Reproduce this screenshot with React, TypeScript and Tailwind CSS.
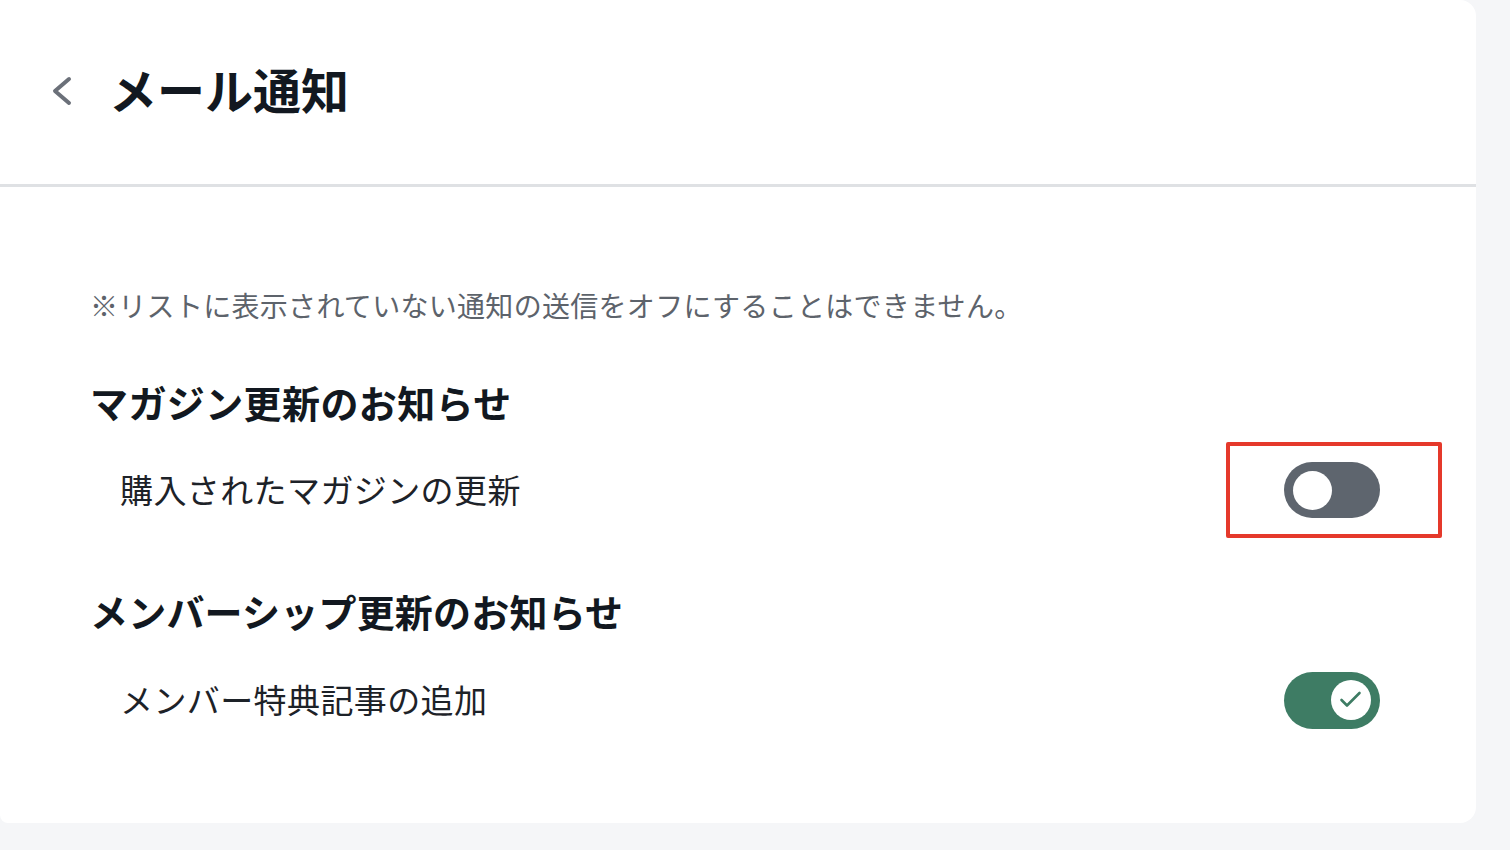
import React from 'react'

const font = { fontFamily: '"Noto Sans CJK JP", "Noto Sans", sans-serif' }

function Toggle({ on }: { on: boolean }) {
  if (on) {
    return (
      <div className="flex h-[57px] w-[96px] items-center justify-end rounded-full bg-[#3e7c64] pr-[9px]">
        <div className="flex h-[40px] w-[40px] items-center justify-center rounded-full bg-white">
          <svg width="40" height="40" viewBox="0 0 40 40" fill="none">
            <polyline
              points="10.5,20 16,25.5 28.5,13"
              stroke="#3e7c64"
              strokeWidth="2.6"
              strokeLinecap="round"
              strokeLinejoin="round"
            />
          </svg>
        </div>
      </div>
    )
  }
  return (
    <div className="flex h-[56px] w-[96px] items-center rounded-full bg-[#5e656e] pl-[9px]">
      <div className="h-[39px] w-[39px] rounded-full bg-white" />
    </div>
  )
}

function Row({ label, on, highlight }: { label: string; on: boolean; highlight?: boolean }) {
  return (
    <div className="flex h-[96px] items-center justify-between pl-[30px] pr-[96px]">
      <span className="-mt-[2px] text-[33px] leading-[48px] tracking-[0.4px] text-[#1d2228]" style={font}>
        {label}
      </span>
      <div className="relative">
        <Toggle on={on} />
        {highlight && (
          <div className="absolute -top-[20px] -bottom-[20px] -left-[58px] -right-[62px] rounded-[2px] border-[4px] border-[#e5392b]" />
        )}
      </div>
    </div>
  )
}

export default function App() {
  return (
    <div className="min-h-[850px] w-full bg-[#f5f6f8]">
      <div className="w-[1476px] rounded-br-2xl rounded-tr-2xl rounded-bl-lg bg-white pb-[75px]">
        <div className="flex h-[184px] items-center pb-[8px] pl-[49px]">
          <svg width="26" height="34" viewBox="0 0 26 34" fill="none" className="mt-[6px]">
            <polyline
              points="20,5 6,17 20,29"
              stroke="#6b7079"
              strokeWidth="4"
              strokeLinecap="round"
              strokeLinejoin="round"
            />
          </svg>
          <h1
            className="ml-[34px] text-[48px] font-bold leading-[60px] text-[#121820]"
            style={font}
          >
            メール通知
          </h1>
        </div>
        <div className="h-[3px] bg-[#dfe1e4]" />

        <div className="pl-[90px]">
          <p className="mt-[97px] text-[28px] leading-[42px] tracking-[0.3px] text-[#5d636b]" style={font}>
            ※リストに表示されていない通知の送信をオフにすることはできません。
          </p>

          <h2 className="mt-[49px] text-[38px] font-bold leading-[54px] tracking-[0.4px] text-[#121820]" style={font}>
            マガジン更新のお知らせ
          </h2>
          <div className="mt-[13px]">
            <Row label="購入されたマガジンの更新" on={false} highlight />
          </div>

          <h2 className="mt-[46px] text-[38px] font-bold leading-[54px] tracking-[0.2px] text-[#121820]" style={font}>
            メンバーシップ更新のお知らせ
          </h2>
          <div className="mt-[14px]">
            <Row label="メンバー特典記事の追加" on />
          </div>
        </div>
      </div>
    </div>
  )
}
